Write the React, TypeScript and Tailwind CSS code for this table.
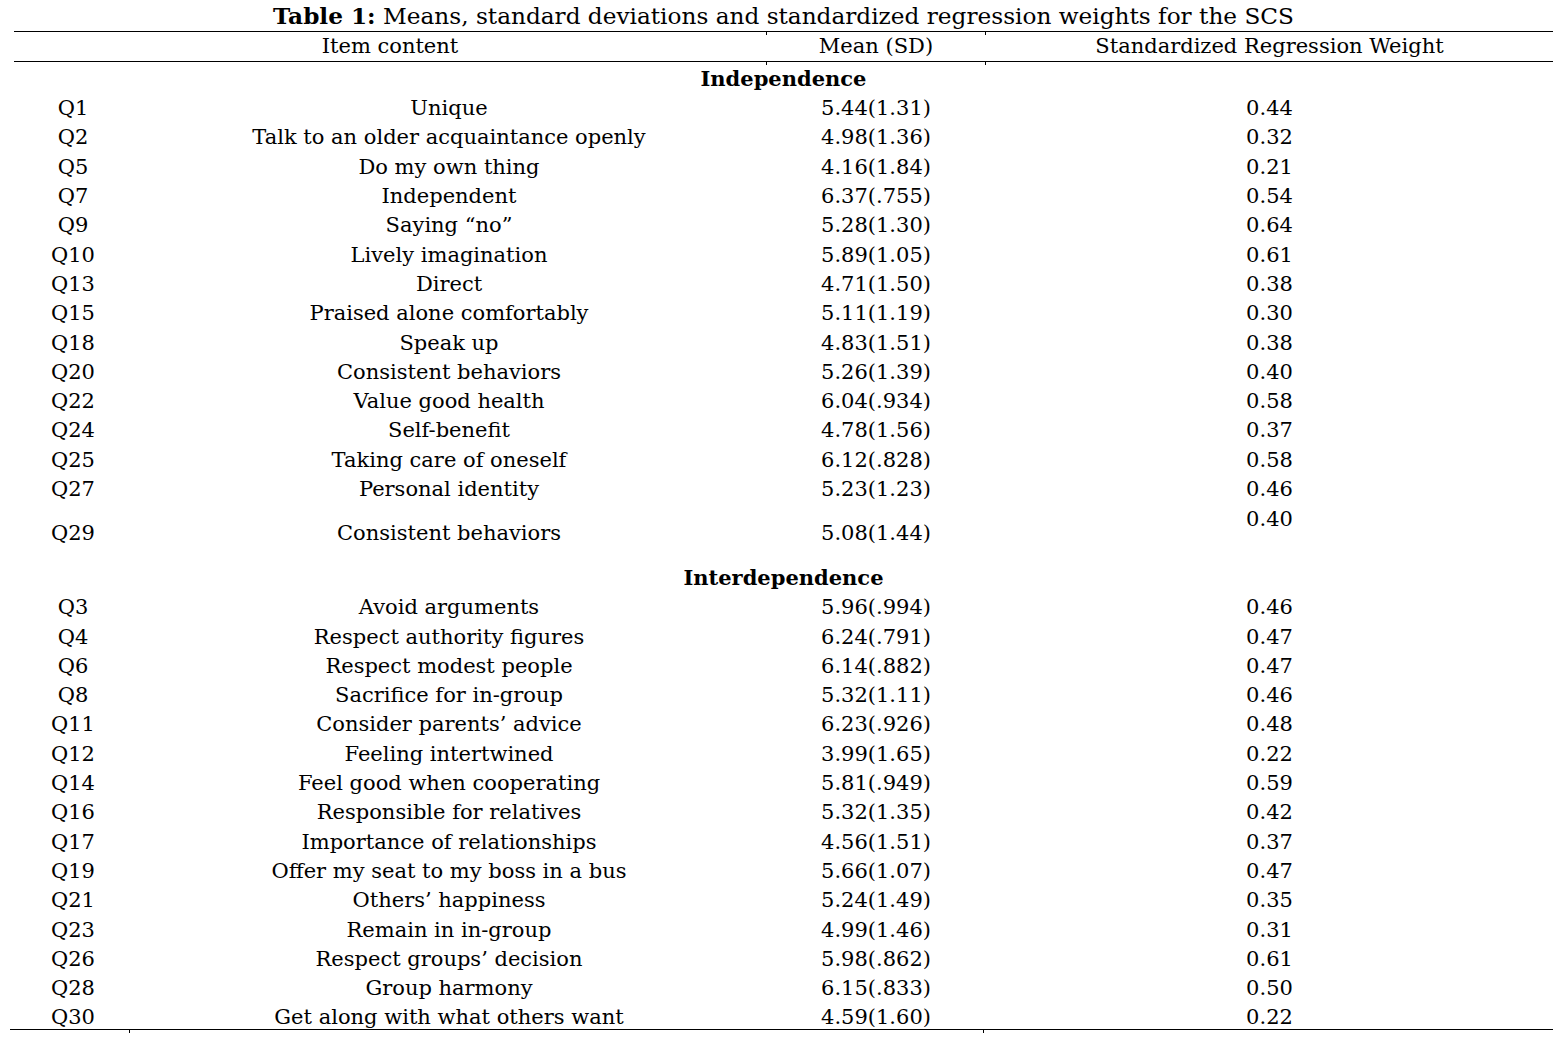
const independence = [
  ["Q1", "Unique", "5.44(1.31)", "0.44"],
  ["Q2", "Talk to an older acquaintance openly", "4.98(1.36)", "0.32"],
  ["Q5", "Do my own thing", "4.16(1.84)", "0.21"],
  ["Q7", "Independent", "6.37(.755)", "0.54"],
  ["Q9", "Saying \u201cno\u201d", "5.28(1.30)", "0.64"],
  ["Q10", "Lively imagination", "5.89(1.05)", "0.61"],
  ["Q13", "Direct", "4.71(1.50)", "0.38"],
  ["Q15", "Praised alone comfortably", "5.11(1.19)", "0.30"],
  ["Q18", "Speak up", "4.83(1.51)", "0.38"],
  ["Q20", "Consistent behaviors", "5.26(1.39)", "0.40"],
  ["Q22", "Value good health", "6.04(.934)", "0.58"],
  ["Q24", "Self-benefit", "4.78(1.56)", "0.37"],
  ["Q25", "Taking care of oneself", "6.12(.828)", "0.58"],
  ["Q27", "Personal identity", "5.23(1.23)", "0.46"],
]

const interdependence = [
  ["Q3", "Avoid arguments", "5.96(.994)", "0.46"],
  ["Q4", "Respect authority figures", "6.24(.791)", "0.47"],
  ["Q6", "Respect modest people", "6.14(.882)", "0.47"],
  ["Q8", "Sacrifice for in-group", "5.32(1.11)", "0.46"],
  ["Q11", "Consider parents\u2019 advice", "6.23(.926)", "0.48"],
  ["Q12", "Feeling intertwined", "3.99(1.65)", "0.22"],
  ["Q14", "Feel good when cooperating", "5.81(.949)", "0.59"],
  ["Q16", "Responsible for relatives", "5.32(1.35)", "0.42"],
  ["Q17", "Importance of relationships", "4.56(1.51)", "0.37"],
  ["Q19", "Offer my seat to my boss in a bus", "5.66(1.07)", "0.47"],
  ["Q21", "Others\u2019 happiness", "5.24(1.49)", "0.35"],
  ["Q23", "Remain in in-group", "4.99(1.46)", "0.31"],
  ["Q26", "Respect groups\u2019 decision", "5.98(.862)", "0.61"],
  ["Q28", "Group harmony", "6.15(.833)", "0.50"],
  ["Q30", "Get along with what others want", "4.59(1.60)", "0.22"],
]

function Row({ row }: { row: string[] }) {
  return (
    <div className="flex h-[29.3px] items-center leading-none">
      <div className="w-[118px] text-center">{row[0]}</div>
      <div className="w-[634px] text-center">{row[1]}</div>
      <div className="w-[220px] text-center">{row[2]}</div>
      <div className="w-[567px] text-center">{row[3]}</div>
    </div>
  )
}

export default function App() {
  return (
    <div className="h-[1042px] w-[1559px] bg-white font-['DejaVu_Serif',serif] text-[21px] text-black">
      <div className="flex h-[31px] items-end justify-center pb-[4px] pl-[8px] text-[23.2px] leading-none">
        <span className="font-bold">Table 1:</span>
        <span>&nbsp;Means, standard deviations and standardized regression weights for the SCS</span>
      </div>

      <div className="relative ml-[14px] w-[1539px] border-y-[1.5px] border-black">
        <div className="flex h-[29px] items-center leading-none">
          <div className="w-[752px] text-center">Item content</div>
          <div className="w-[220px] text-center">Mean (SD)</div>
          <div className="w-[567px] text-center">Standardized Regression Weight</div>
        </div>
        <div className="absolute left-[752px] top-0 h-[3px] w-px bg-black" />
        <div className="absolute left-[971px] top-0 h-[3px] w-px bg-black" />
        <div className="absolute -bottom-[4px] left-[752px] h-[3px] w-px bg-black" />
        <div className="absolute -bottom-[4px] left-[971px] h-[3px] w-px bg-black" />
      </div>

      <div className="ml-[14px] w-[1539px]">
        <div className="flex h-[32px] items-center justify-center pt-[1px] font-bold leading-none">
          Independence
        </div>
        {independence.map((r) => (
          <Row key={r[0]} row={r} />
        ))}
        <div className="flex h-[44px] leading-none">
          <div className="w-[118px] self-end pb-[4px] text-center">Q29</div>
          <div className="w-[634px] self-end pb-[4px] text-center">Consistent behaviors</div>
          <div className="w-[220px] self-end pb-[4px] text-center">5.08(1.44)</div>
          <div className="w-[567px] pt-[5px] text-center">0.40</div>
        </div>
        <div className="flex h-[45px] items-end justify-center pb-[5px] font-bold leading-none">
          Interdependence
        </div>
        {interdependence.map((r) => (
          <Row key={r[0]} row={r} />
        ))}
      </div>

      <div className="relative -mt-[4px] ml-[10px] w-[1543px] border-t-[1.5px] border-black">
        <div className="absolute left-[119px] top-0 h-[3px] w-px bg-black" />
        <div className="absolute left-[973px] top-0 h-[3px] w-px bg-black" />
      </div>
    </div>
  )
}
